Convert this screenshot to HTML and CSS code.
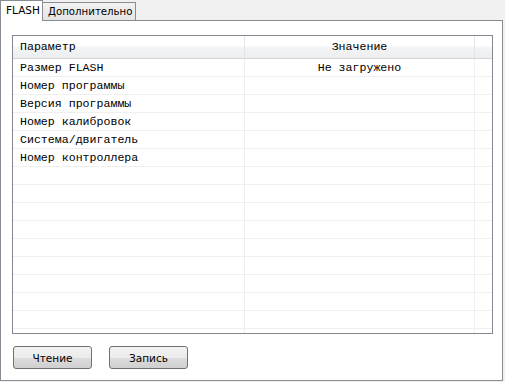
FILE: index.html
```html
<!DOCTYPE html>
<html>
<head>
<meta charset="utf-8">
<link rel="stylesheet" href="styles.css">
</head>
<body>
<div class="window">
  <div class="tabs">
    <div class="tab active">FLASH</div>
    <div class="tab">Дополнительно</div>
  </div>
  <div class="panel">
    <div class="grid">
      <div class="row head">
        <div class="c1">Параметр</div>
        <div class="c2">Значение</div>
        <div class="c3"></div>
      </div>
      <div class="row"><div class="c1">Размер FLASH</div><div class="c2">Не загружено</div><div class="c3"></div></div>
      <div class="row"><div class="c1">Номер программы</div><div class="c2"></div><div class="c3"></div></div>
      <div class="row"><div class="c1">Версия программы</div><div class="c2"></div><div class="c3"></div></div>
      <div class="row"><div class="c1">Номер калибровок</div><div class="c2"></div><div class="c3"></div></div>
      <div class="row"><div class="c1">Система/двигатель</div><div class="c2"></div><div class="c3"></div></div>
      <div class="row"><div class="c1">Номер контроллера</div><div class="c2"></div><div class="c3"></div></div>
      <div class="row"><div class="c1"></div><div class="c2"></div><div class="c3"></div></div>
      <div class="row"><div class="c1"></div><div class="c2"></div><div class="c3"></div></div>
      <div class="row"><div class="c1"></div><div class="c2"></div><div class="c3"></div></div>
      <div class="row"><div class="c1"></div><div class="c2"></div><div class="c3"></div></div>
      <div class="row"><div class="c1"></div><div class="c2"></div><div class="c3"></div></div>
      <div class="row"><div class="c1"></div><div class="c2"></div><div class="c3"></div></div>
      <div class="row"><div class="c1"></div><div class="c2"></div><div class="c3"></div></div>
      <div class="row"><div class="c1"></div><div class="c2"></div><div class="c3"></div></div>
      <div class="row"><div class="c1"></div><div class="c2"></div><div class="c3"></div></div>
      <div class="row"><div class="c1"></div><div class="c2"></div><div class="c3"></div></div>
    </div>
    <div class="buttons">
      <button class="btn">Чтение</button>
      <button class="btn">Запись</button>
    </div>
  </div>
</div>
</body>
</html>
```

FILE: styles.css
```css
html, body {
  margin: 0;
  padding: 0;
  background: #f0f0f0;
}
.window {
  width: 505px;
  height: 382px;
  display: flex;
  flex-direction: column;
  font-family: "DejaVu Sans", Tahoma, sans-serif;
}
.tabs {
  display: flex;
  align-items: flex-end;
  height: 20px;
  position: relative;
  z-index: 1;
}
.tab {
  box-sizing: border-box;
  height: 18px;
  padding: 0 2px 0 5px;
  font-size: 10.2px;
  line-height: 17px;
  color: #000;
  border: 1px solid #898c95;
  border-bottom: none;
  border-left: none;
  background: linear-gradient(#f2f2f2, #e4e4e4);
}
.tab.active {
  width: 43px;
  padding: 0 0 0 5px;
  line-height: 19px;
  font-size: 10.5px;
  background: #fff;
  border-left: 1px solid #898c95;
  margin-bottom: -1px;
  height: 21px;
}
.panel {
  box-sizing: border-box;
  width: 503px;
  height: 361px;
  background: #fff;
  border: 1px solid #898c95;
  padding: 14px 10px 0 11px;
  display: flex;
  flex-direction: column;
}
.grid {
  box-sizing: border-box;
  width: 481px;
  height: 299px;
  border: 1px solid #828790;
  overflow: hidden;
  font-family: "Liberation Mono", "Courier New", monospace;
  font-size: 11.6px;
  color: #000;
}
.row {
  display: flex;
  height: 18px;
  border-bottom: 1px solid #efefef;
  box-sizing: border-box;
}
.row.head {
  height: 23px;
  border-bottom: 1px solid #d5d5d5;
  background: linear-gradient(#ffffff 0%, #ffffff 45%, #f3f4f6 50%, #eceef0 100%);
}
.c1, .c2, .c3 {
  box-sizing: border-box;
  border-right: 1px solid #efefef;
  white-space: nowrap;
  line-height: 17px;
}
.c1 {
  width: 232px;
  padding-left: 7px;
}
.c2 {
  width: 230px;
  text-align: center;
}
.c3 {
  flex: 1;
  border-right: none;
}
.head .c1, .head .c2 {
  line-height: 22px;
  border-right: 1px solid #e3e5e8;
}
.buttons {
  display: flex;
  gap: 17px;
  padding: 12px 0 0 1px;
}
.btn {
  box-sizing: border-box;
  width: 79px;
  height: 23px;
  margin: 0;
  padding: 0;
  font-family: "DejaVu Sans", Tahoma, sans-serif;
  font-size: 10.5px;
  color: #000;
  border: 1px solid #707070;
  border-radius: 3px;
  background: linear-gradient(#f2f2f2 0%, #ebebeb 50%, #dddddd 51%, #cfcfcf 100%);
}
```
